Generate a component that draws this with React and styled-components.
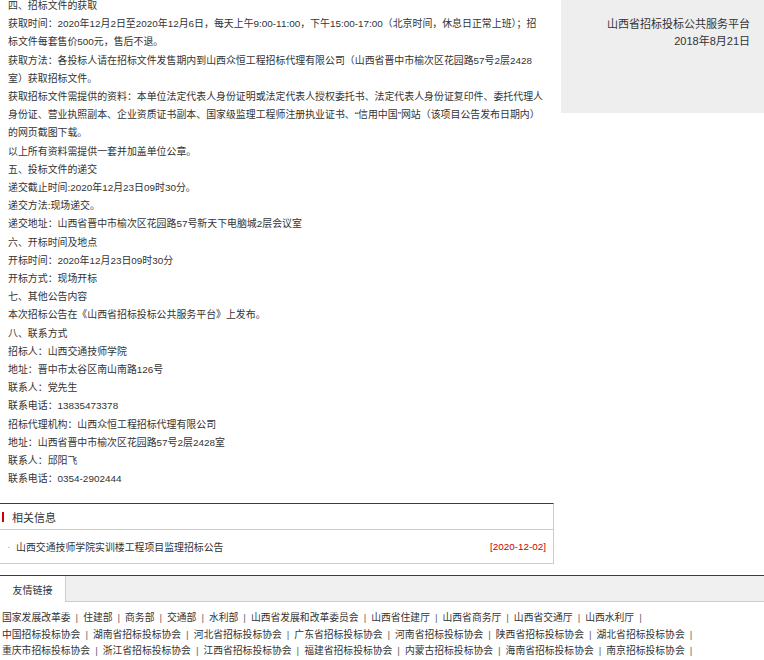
import React from "react";
import styled, { createGlobalStyle } from "styled-components";

const GlobalStyle = createGlobalStyle`
  html, body { margin: 0; padding: 0; background: #fff; }
  body {
    font-family: "Liberation Sans", "Noto Sans CJK SC", sans-serif;
    color: #333;
    overflow: hidden;
  }
  a { color: inherit; text-decoration: none; }
`;

const Page = styled.div`
  width: 764px;
`;

const TopRow = styled.div`
  display: flex;
  align-items: flex-start;
  gap: 8px;
`;

const Article = styled.div`
  width: 553px;
  box-sizing: border-box;
  padding: 0 8px;
  margin-top: -3px;
  font-size: 9.92px;
  line-height: 18.2px;
  color: #333;
`;

const Para = styled.p`
  margin: 0;
  white-space: nowrap;
`;

const Sidebar = styled.div`
  width: 203px;
  height: 113px;
  box-sizing: border-box;
  background: #eeeeee;
  padding: 16px 14px 0 0;
  text-align: right;
  font-size: 11px;
  line-height: 17px;
  color: #333;
`;

const Related = styled.div`
  margin-top: 14.6px;
  width: 554px;
  box-sizing: border-box;
  border-top: 1px solid #c00;
  border-right: 1px solid #ccc;
`;

const RelatedHeader = styled.div`
  height: 25px;
  border-bottom: 1px solid #ccc;
  display: flex;
  align-items: center;
  font-size: 11px;
  color: #333;
`;

const Bar = styled.span`
  width: 2px;
  height: 10px;
  margin: 1px 8px 0 2px;
  background: #c00;
`;

const RelatedItem = styled.div`
  height: 33px;
  border-bottom: 1px solid #ccc;
  display: flex;
  align-items: center;
  padding: 0 7px 0 7px;
  font-size: 9.9px;
`;

const Dot = styled.span`
  width: 9px;
  color: #999;
`;

const ItemLink = styled.a`
  flex: 1;
  color: #333;
`;

const DateText = styled.span`
  color: #c00;
`;

const Links = styled.div`
  margin-top: 11px;
  border-top: 1px solid #c00;
`;

const TabBar = styled.div`
  height: 25px;
  display: flex;
  background: #f0f0f0;
  border-bottom: 1px solid #ccc;
`;

const Tab = styled.div`
  width: 65px;
  height: 26px;
  background: #fff;
  border-right: 1px solid #ccc;
  display: flex;
  align-items: center;
  justify-content: center;
  font-size: 10px;
  color: #333;
`;

const LinksBody = styled.div`
  padding: 8px 0 0 2px;
  font-size: 9.8px;
  line-height: 16.5px;
`;

const LinkRow = styled.div`
  white-space: nowrap;
`;

const Sep = styled.span`
  padding: 0 5px;
  color: #666;
`;

const rows = [
  ["国家发展改革委", "住建部", "商务部", "交通部", "水利部", "山西省发展和改革委员会", "山西省住建厅", "山西省商务厅", "山西省交通厅", "山西水利厅"],
  ["中国招标投标协会", "湖南省招标投标协会", "河北省招标投标协会", "广东省招标投标协会", "河南省招标投标协会", "陕西省招标投标协会", "湖北省招标投标协会"],
  ["重庆市招标投标协会", "浙江省招标投标协会", "江西省招标投标协会", "福建省招标投标协会", "内蒙古招标投标协会", "海南省招标投标协会", "南京招标投标协会"],
];

export default function App() {
  return (
    <Page>
      <GlobalStyle />
      <TopRow>
        <Article>
          <Para>四、招标文件的获取</Para>
          <Para>
            获取时间：2020年12月2日至2020年12月6日，每天上午9:00-11:00，下午15:00-17:00（北京时间，休息日正常上班）；招
            <br />
            标文件每套售价500元，售后不退。
          </Para>
          <Para>
            获取方法：各投标人请在招标文件发售期内到山西众恒工程招标代理有限公司（山西省晋中市榆次区花园路57号2层2428
            <br />
            室）获取招标文件。
          </Para>
          <Para>
            获取招标文件需提供的资料：本单位法定代表人身份证明或法定代表人授权委托书、法定代表人身份证复印件、委托代理人
            <br />
            身份证、营业执照副本、企业资质证书副本、国家级监理工程师注册执业证书、“信用中国”网站（该项目公告发布日期内）
            <br />
            的网页截图下载。
          </Para>
          <Para>以上所有资料需提供一套并加盖单位公章。</Para>
          <Para>五、投标文件的递交</Para>
          <Para>递交截止时间:2020年12月23日09时30分。</Para>
          <Para>递交方法:现场递交。</Para>
          <Para>递交地址：山西省晋中市榆次区花园路57号新天下电脑城2层会议室</Para>
          <Para>六、开标时间及地点</Para>
          <Para>开标时间：2020年12月23日09时30分</Para>
          <Para>开标方式：现场开标</Para>
          <Para>七、其他公告内容</Para>
          <Para>本次招标公告在《山西省招标投标公共服务平台》上发布。</Para>
          <Para>八、联系方式</Para>
          <Para>招标人：山西交通技师学院</Para>
          <Para>地址：晋中市太谷区南山南路126号</Para>
          <Para>联系人：党先生</Para>
          <Para>联系电话：13835473378</Para>
          <Para>招标代理机构：山西众恒工程招标代理有限公司</Para>
          <Para>地址：山西省晋中市榆次区花园路57号2层2428室</Para>
          <Para>联系人：邱阳飞</Para>
          <Para>联系电话：0354-2902444</Para>
        </Article>
        <Sidebar>
          <div>山西省招标投标公共服务平台</div>
          <div>2018年8月21日</div>
        </Sidebar>
      </TopRow>

      <Related>
        <RelatedHeader>
          <Bar />
          相关信息
        </RelatedHeader>
        <RelatedItem>
          <Dot>·</Dot>
          <ItemLink href="#">山西交通技师学院实训楼工程项目监理招标公告</ItemLink>
          <DateText>[2020-12-02]</DateText>
        </RelatedItem>
      </Related>

      <Links>
        <TabBar>
          <Tab>友情链接</Tab>
        </TabBar>
        <LinksBody>
          {rows.map((row, i) => (
            <LinkRow key={i}>
              {row.map((name) => (
                <React.Fragment key={name}>
                  <a href="#">{name}</a>
                  <Sep>|</Sep>
                </React.Fragment>
              ))}
            </LinkRow>
          ))}
        </LinksBody>
      </Links>
    </Page>
  );
}
